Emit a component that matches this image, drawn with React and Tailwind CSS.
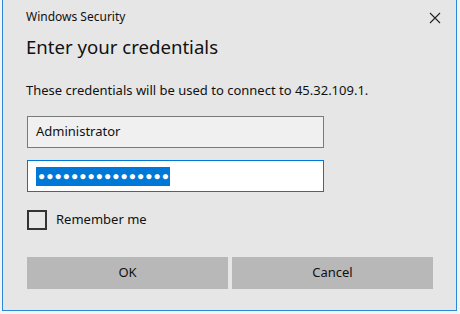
import React from 'react';

const font = { fontFamily: '"Noto Sans", "Open Sans", sans-serif' };

export default function App() {
  return (
    <div className="w-[460px] h-[314px] bg-[#f4f4f4] overflow-hidden" style={font}>
      <div className="ml-[2px] w-[455px] h-[311px] bg-[#e6e6e6] border-l border-r border-b border-[#2b88d8] pl-[23px] pr-[23px] relative">
        <div className="flex items-center justify-between h-[32px] pt-[2px]">
          <span className="text-[12px] text-[#111]">Windows Security</span>
          <svg width="12" height="12" viewBox="0 0 12 12" className="mr-[-8px] mt-[1px]">
            <path d="M1 1 L11 11 M11 1 L1 11" stroke="#222" strokeWidth="1.1" />
          </svg>
        </div>
        <div className="text-[18.6px] leading-[28px] text-[#111] mt-[1px]">Enter your credentials</div>
        <div className="text-[13px] text-[#111] mt-[20px] leading-[18px]">
          These credentials will be used to connect to 45.32.109.1.
        </div>
        <div className="mt-[17px] ml-[1px] w-[297px] h-[32px] border border-[#7a7a7a] bg-[#f0f0f0] flex items-center pl-[8px] text-[13px] text-[#111]">
          Administrator
        </div>
        <div className="mt-[12px] ml-[1px] w-[297px] h-[32px] border border-[#0078d7] bg-white flex items-center pl-[8px]">
          <span className="bg-[#0078d7] h-[19px] flex items-center pl-[2px] text-white text-[12px] tracking-[1px] leading-none">
            ●●●●●●●●●●●●●●●●
          </span>
        </div>
        <div className="mt-[18px] ml-[1px] flex items-center gap-[9px]">
          <div className="w-[20px] h-[20px] border-2 border-[#333]" />
          <span className="text-[13px] text-[#111]">Remember me</span>
        </div>
        <div className="mt-[27px] ml-[1px] flex gap-[4px]">
          <button className="w-[201px] h-[32px] bg-[#b8b8b8] text-[13px] text-[#111]">OK</button>
          <button className="w-[201px] h-[32px] bg-[#b8b8b8] text-[13px] text-[#111]">Cancel</button>
        </div>
      </div>
    </div>
  );
}
